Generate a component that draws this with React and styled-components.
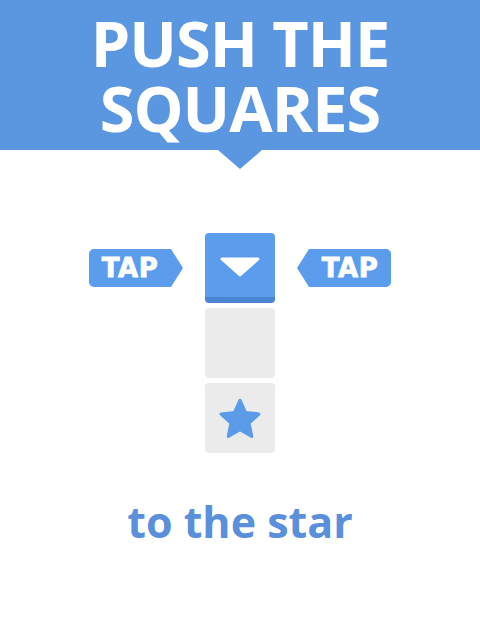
import React from "react";
import styled, { createGlobalStyle } from "styled-components";

const Global = createGlobalStyle`
  html, body { margin: 0; padding: 0; background: #ffffff; }
  body { font-family: "Open Sans", "Liberation Sans", sans-serif; }
`;

const Page = styled.div`
  width: 480px;
  height: 640px;
  display: flex;
  flex-direction: column;
  align-items: center;
  background: #ffffff;
  overflow: hidden;
`;

const Header = styled.header`
  position: relative;
  width: 100%;
  height: 150px;
  box-sizing: border-box;
  padding-top: 10px;
  background: #5b96e0;
  display: flex;
  flex-direction: column;
  align-items: center;

  &::after {
    content: "";
    position: absolute;
    left: 50%;
    bottom: -19px;
    margin-left: -22px;
    border-top: 19px solid #5b96e0;
    border-left: 22px solid transparent;
    border-right: 22px solid transparent;
  }
`;

const TitleLine = styled.div`
  font-family: "Open Sans", sans-serif;
  font-weight: 700;
  font-size: 63px;
  line-height: 65px;
  height: 65px;
  letter-spacing: -1px;
  color: #ffffff;
  text-align: center;
  white-space: nowrap;
`;

const Board = styled.div`
  margin-top: 83px;
  display: grid;
  grid-template-columns: 1fr 70px 1fr;
  column-gap: 22px;
  row-gap: 5px;
  width: 100%;
  align-items: center;
`;

const Tap = styled.div`
  position: relative;
  grid-row: 1;
  grid-column: ${(p) => (p.$side === "left" ? 1 : 3)};
  justify-self: ${(p) => (p.$side === "left" ? "end" : "start")};
  margin-${(p) => (p.$side === "left" ? "right" : "left")}: 12px;
  width: 82px;
  height: 38px;
  background: #5c9ced;
  border-radius: ${(p) => (p.$side === "left" ? "5px 0 0 5px" : "0 5px 5px 0")};
  display: flex;
  align-items: center;
  justify-content: center;
  font-family: "DejaVu Sans", "Liberation Sans", sans-serif;
  font-weight: 700;
  font-size: 26px;
  color: #ffffff;
  -webkit-text-stroke: 0.8px #ffffff;
  letter-spacing: 0.5px;

  &::after {
    content: "";
    position: absolute;
    top: 0;
    ${(p) => (p.$side === "left" ? "right: -12px;" : "left: -12px;")}
    border-top: 19px solid transparent;
    border-bottom: 19px solid transparent;
    ${(p) =>
      p.$side === "left"
        ? "border-left: 12px solid #5c9ced;"
        : "border-right: 12px solid #5c9ced;"}
  }
`;

const Cell = styled.div`
  grid-column: 2;
  grid-row: ${(p) => p.$row};
  width: 70px;
  height: 70px;
  box-sizing: border-box;
  border-radius: 4px;
  display: flex;
  align-items: center;
  justify-content: center;
  background: ${(p) => (p.$active ? "#5c9ced" : "#ebebeb")};
  ${(p) => (p.$active ? "border-bottom: 6px solid #4b84d2; padding-top: 4px;" : "")}
`;

const Caption = styled.p`
  margin: 40px 0 0;
  font-family: "Open Sans", sans-serif;
  font-weight: 700;
  font-size: 43px;
  line-height: 58px;
  color: #5a8fdb;
  text-align: center;
`;

const Arrow = () => (
  <svg width="42" height="22" viewBox="0 0 42 22">
    <polygon
      points="3,3 39,3 21,19"
      fill="#ffffff"
      stroke="#ffffff"
      strokeWidth="3"
      strokeLinejoin="round"
    />
  </svg>
);

const Star = () => (
  <svg width="44" height="42" viewBox="0 0 40 38">
    <polygon
      points="20,3 25,14.1 37.1,15.4 28.1,23.6 30.6,35.6 20,29.5 9.4,35.6 11.9,23.6 2.9,15.4 15,14.1"
      fill="#5b9be8"
      stroke="#5b9be8"
      strokeWidth="3"
      strokeLinejoin="round"
    />
  </svg>
);

export default function App() {
  return (
    <Page>
      <Global />
      <Header>
        <TitleLine>PUSH THE</TitleLine>
        <TitleLine>SQUARES</TitleLine>
      </Header>
      <Board>
        <Tap $side="left">TAP</Tap>
        <Cell $row={1} $active>
          <Arrow />
        </Cell>
        <Tap $side="right">TAP</Tap>
        <Cell $row={2} />
        <Cell $row={3}>
          <Star />
        </Cell>
      </Board>
      <Caption>to the star</Caption>
    </Page>
  );
}
